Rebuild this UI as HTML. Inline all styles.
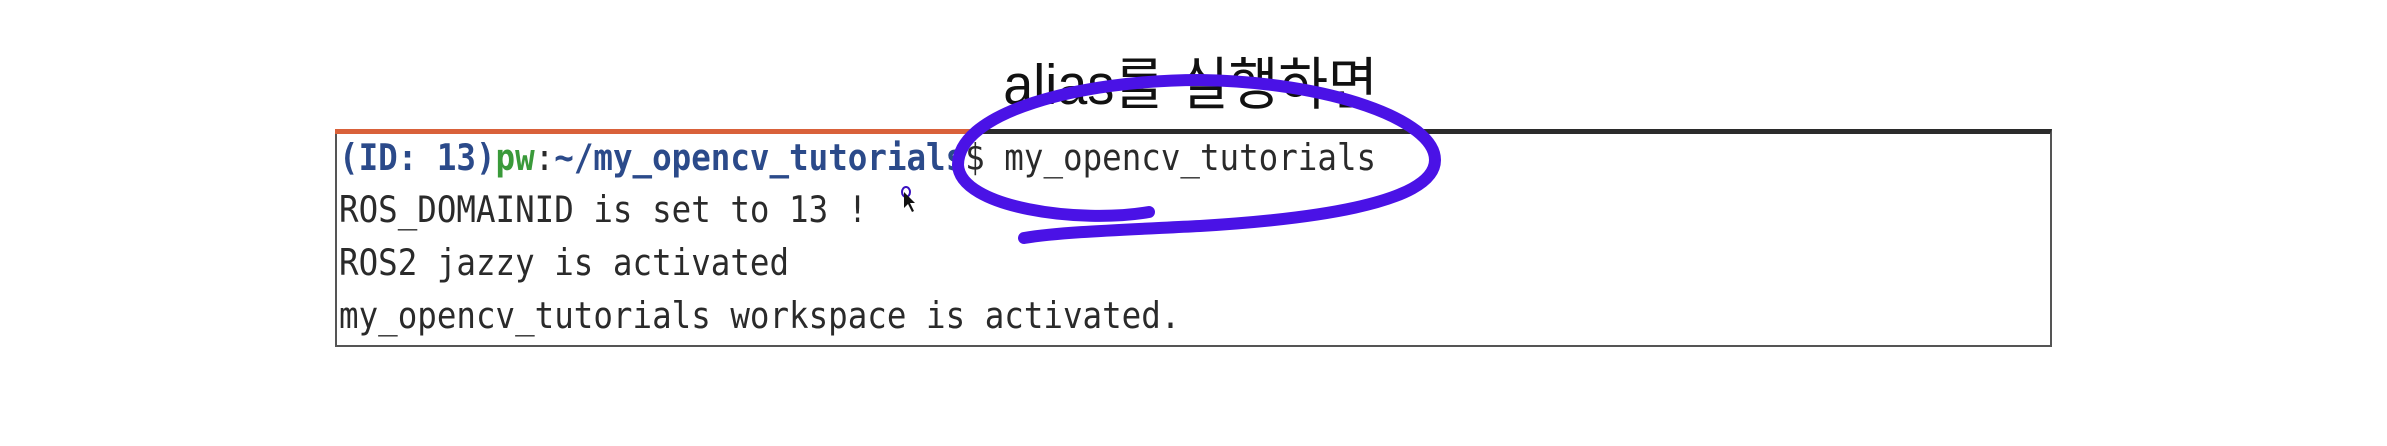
<!DOCTYPE html>
<html><head><meta charset="utf-8"><style>
html,body{margin:0;padding:0;width:2387px;height:446px;background:#fff;overflow:hidden;position:relative}
.title{position:absolute;left:0;width:2387px;top:40px;text-align:center;font-family:"Liberation Sans","Noto Sans CJK KR",sans-serif;font-size:54px;color:#111;transform:translateX(-3px) scaleY(1.05)}
.box{position:absolute;left:335px;top:129px;width:1713px;height:211px;border:2px solid #555;border-top:5px solid #2b2b2b;background:#fff}
.orange{position:absolute;left:335px;top:129px;width:640px;height:5px;background:#d9613a}
.t{position:absolute;left:339px;font-family:"DejaVu Sans Mono","Liberation Mono",monospace;font-size:32.5px;color:#2a2a2a;white-space:pre;transform:scaleY(1.12);transform-origin:left bottom}
.b{color:#2b4a8a;font-weight:bold}.g{color:#3a9a3a;font-weight:bold}
svg{position:absolute;left:0;top:0}
</style></head><body>
<div class="title">alias를 실행하면</div>
<div class="box"></div><div class="orange"></div>
<div class="t" style="top:141px"><span class="b">(ID: 13)</span><span class="g">pw</span>:<span class="b">~/my_opencv_tutorials</span>$ my_opencv_tutorials</div>
<div class="t" style="top:193px">ROS_DOMAINID is set to 13 !</div>
<div class="t" style="top:246px">ROS2 jazzy is activated</div>
<div class="t" style="top:299px">my_opencv_tutorials workspace is activated.</div>
<svg width="2387" height="446">
<path d="M1149 212 C1080 224 960 208 958 165 C958 112 1080 80 1200 80 C1330 82 1435 120 1435 160 C1435 205 1300 220 1200 226 C1120 230 1060 232 1024 238" fill="none" stroke="#4a12e6" stroke-width="12" stroke-linecap="round"/>
<ellipse cx="906" cy="192" rx="4" ry="5" fill="none" stroke="#3a10c0" stroke-width="2"/>
<path d="M904 192 L904 208 L908 204 L912 212 L914 211 L910 203 L915 203 Z" fill="#111"/>
</svg>
</body></html>
